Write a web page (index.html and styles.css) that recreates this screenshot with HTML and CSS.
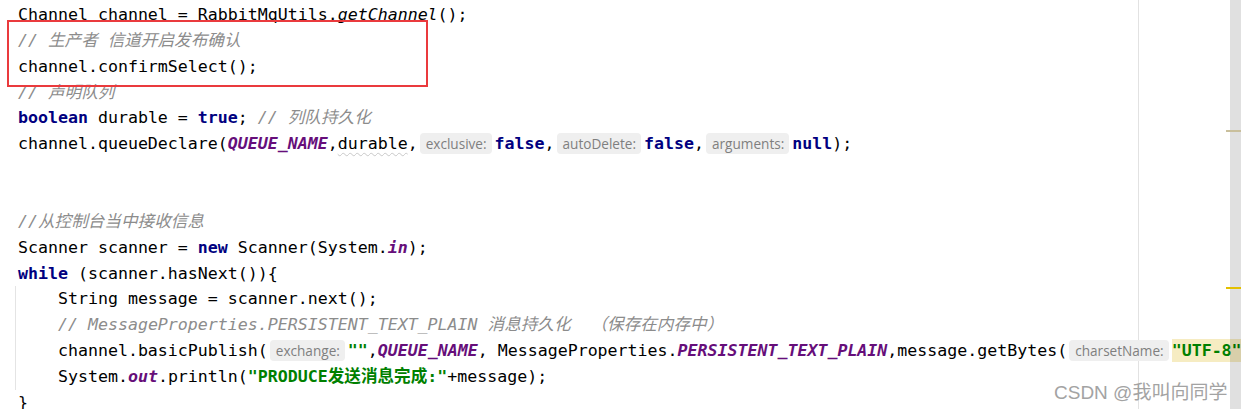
FILE: index.html
```html
<!DOCTYPE html>
<html lang="zh">
<head>
<meta charset="utf-8">
<title>RabbitMQ Producer</title>
<link rel="stylesheet" href="styles.css">
</head>
<body>
<div class="editor">
  <div class="code">
    <div class="ln">Channel channel = RabbitMqUtils.<span class="it">getChannel</span>();</div>
    <div class="ln"><span class="cm">// 生产者 信道开启发布确认</span></div>
    <div class="ln">channel.confirmSelect();</div>
    <div class="ln"><span class="cm">// 声明队列</span></div>
    <div class="ln"><span class="kw">boolean</span> durable = <span class="kw">true</span>; <span class="cm">// 列队持久化</span></div>
    <div class="ln">channel.queueDeclare(<span class="st">QUEUE_NAME</span>,<span class="warn">durable</span>,<span class="hint">exclusive:</span><span class="kw">false</span>,<span class="hint">autoDelete:</span><span class="kw">false</span>,<span class="hint">arguments:</span><span class="kw">null</span>);</div>
    <div class="ln"></div>
    <div class="ln"></div>
    <div class="ln"><span class="cm">//从控制台当中接收信息</span></div>
    <div class="ln">Scanner scanner = <span class="kw">new</span> Scanner(System.<span class="st">in</span>);</div>
    <div class="ln"><span class="kw">while</span> (scanner.hasNext()){</div>
    <div class="block">
      <div class="ln">    String message = scanner.next();</div>
      <div class="ln">    <span class="cm">// MessageProperties.PERSISTENT_TEXT_PLAIN 消息持久化  （保存在内存中）</span></div>
      <div class="ln">    channel.basicPublish(<span class="hint">exchange:</span><span class="str">""</span>,<span class="st">QUEUE_NAME</span>, MessageProperties.<span class="st">PERSISTENT_TEXT_PLAIN</span>,message.getBytes(<span class="hint">charsetName:</span><span class="str hl">"UTF-8"</span>));</div>
      <div class="ln">    System.<span class="st">out</span>.println(<span class="str">"PRODUCE发送消息完成:"</span>+message);</div>
    </div>
    <div class="ln">}</div>
  </div>
  <div class="redbox"></div>
  <div class="scrollbar">
    <span class="mark mark-tan"></span>
    <span class="mark mark-yellow"></span>
  </div>
  <div class="watermark">CSDN @我叫向同学</div>
</div>
</body>
</html>
```

FILE: styles.css
```css
html, body {
  margin: 0;
  padding: 0;
  background: #ffffff;
}

.editor {
  position: relative;
  width: 1241px;
  height: 409px;
  overflow: hidden;
  background-color: #ffffff;
  background-image: linear-gradient(to right, transparent 1138px, #e2e2e2 1138px, #e2e2e2 1139px, transparent 1139px);
}

.code {
  padding: 2px 0 0 18px;
  font-family: "DejaVu Sans Mono", "Noto Sans CJK SC", monospace;
  font-size: 16.6px;
  color: #000000;
}

.ln {
  height: 25.87px;
  line-height: 25.87px;
  white-space: pre;
}

.block {
  margin-left: -3px;
  padding-left: 2px;
  border-left: 1px solid #e4e4e4;
}

.kw {
  color: #000080;
  font-weight: bold;
}

.it {
  font-style: italic;
}

.st {
  color: #660e7a;
  font-weight: bold;
  font-style: italic;
}

.str {
  color: #008000;
  font-weight: bold;
}

.hl {
  background: #f6ecc2;
  padding: 2px 0;
}

.cm {
  color: #8c8c8c;
  font-style: italic;
}

.warn {
  text-decoration: underline wavy #c8c8c8;
  text-decoration-thickness: 1px;
  text-underline-offset: 3px;
}

.hint {
  display: inline-block;
  height: 21px;
  line-height: 21px;
  padding: 0 5px 0 6px;
  margin: 0 3px 0 2px;
  border-radius: 4px;
  background: #efefef;
  color: #7f7f7f;
  font-family: "Open Sans", "Noto Sans", sans-serif;
  font-size: 13.6px;
  font-style: normal;
  font-weight: normal;
  vertical-align: middle;
  position: relative;
  top: -1px;
}

.redbox {
  position: absolute;
  left: 7px;
  top: 20px;
  width: 417px;
  height: 63px;
  border: 2px solid #ea3a3d;
}

.scrollbar {
  position: absolute;
  top: 0;
  right: 0;
  bottom: 0;
  width: 11px;
  background: rgba(0, 0, 0, 0.12);
}

.mark {
  position: absolute;
  left: -4px;
  width: 15px;
  height: 2px;
}

.mark-tan {
  top: 130px;
  background: #c9bf9c;
}

.mark-yellow {
  top: 287px;
  background: #e3c000;
}

.watermark {
  position: absolute;
  left: 1054px;
  top: 377px;
  font-family: "Liberation Sans", "Noto Sans CJK SC", sans-serif;
  font-size: 19px;
  color: #a3a3a3;
  white-space: nowrap;
}
```
